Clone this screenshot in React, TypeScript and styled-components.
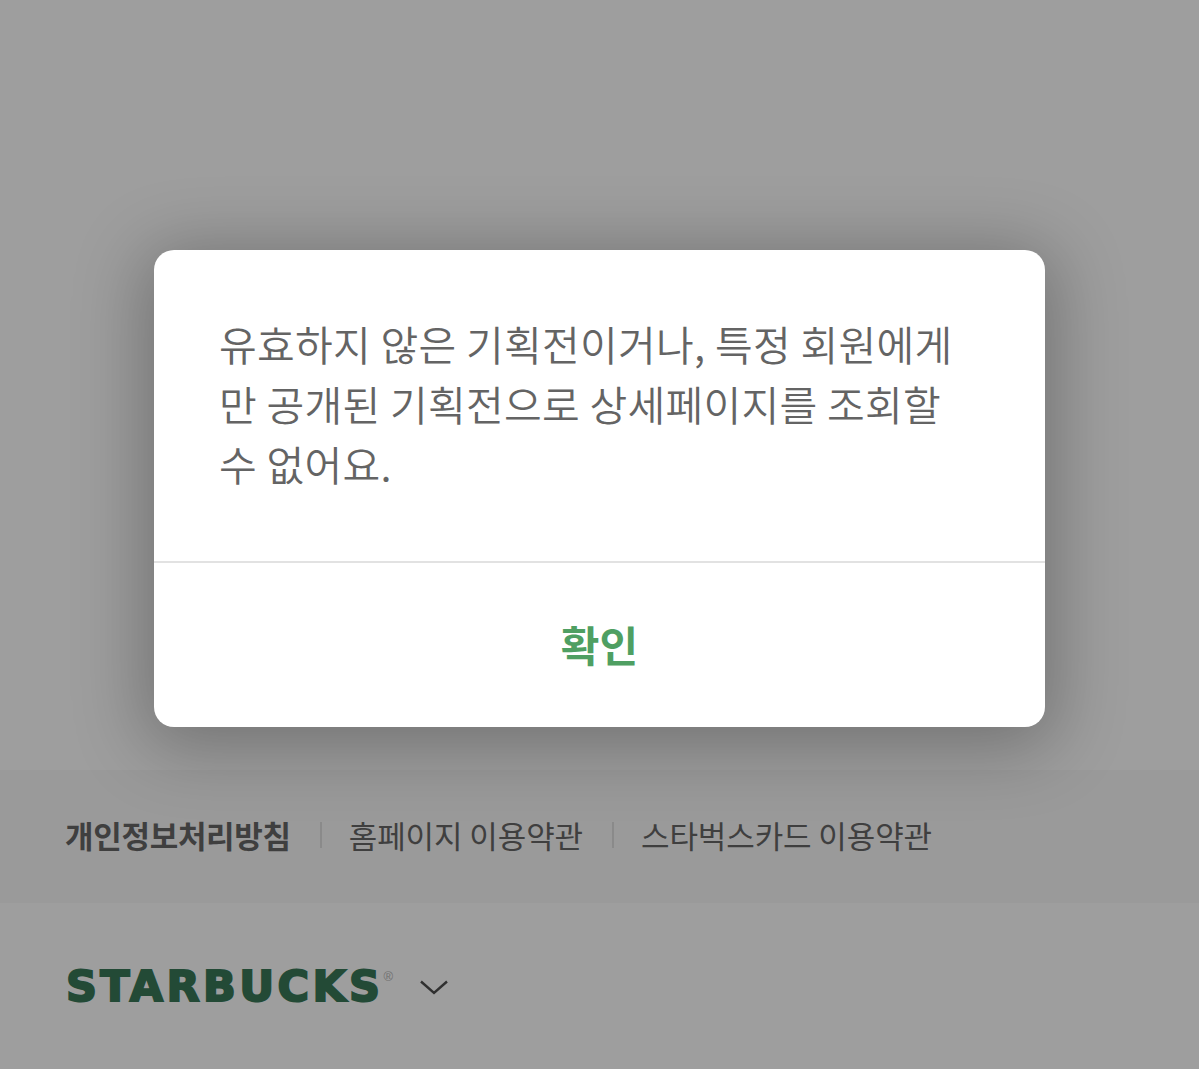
import styled, { createGlobalStyle } from 'styled-components'

const GlobalStyle = createGlobalStyle`
  html, body {
    margin: 0;
    padding: 0;
    background: #9e9e9e;
  }

  * {
    box-sizing: border-box;
  }

  body {
    font-family: "Noto Sans CJK KR", "Noto Sans", sans-serif;
  }
`

const Page = styled.div`
  width: 1199px;
  height: 1069px;
  overflow: hidden;
  display: flex;
  flex-direction: column;
  background: #9e9e9e;
`

const Backdrop = styled.div`
  position: relative;
  z-index: 1;
  height: 770px;
  padding: 250px 154px 0;
`

const Modal = styled.div`
  width: 891px;
  height: 477px;
  background: #fff;
  border-radius: 20px;
  box-shadow: 0 10px 70px 10px rgba(0, 0, 0, 0.28);
  display: flex;
  flex-direction: column;
`

const Message = styled.p`
  height: 313px;
  margin: 0;
  padding: 63px 65px 0;
  border-bottom: 2px solid #e2e2e2;
  font-size: 41px;
  font-weight: 350;
  line-height: 60px;
  letter-spacing: 0.3px;
  color: #646464;
  white-space: nowrap;
`

const ConfirmButton = styled.button`
  flex: 1;
  border: 0;
  padding: 0 0 4px;
  background: transparent;
  font-family: inherit;
  font-size: 42px;
  font-weight: 700;
  color: #4f9f62;
`

const TermsBar = styled.nav`
  height: 133px;
  padding: 0 65px 4px;
  background: #9a9a9a;
  display: flex;
  align-items: center;
`

const TermsLink = styled.a<{ $strong?: boolean }>`
  font-size: 31px;
  font-weight: ${(p) => (p.$strong ? 700 : 400)};
  letter-spacing: ${(p) => (p.$strong ? '-0.3px' : '-0.1px')};
  color: #3f3f3f;
  white-space: nowrap;
`

const Divider = styled.span`
  width: 2px;
  height: 26px;
  margin: 0 27px 0 29px;
  background: #8a8a8a;
`

const BrandRow = styled.div`
  flex: 1;
  padding: 1px 66px 0;
  display: flex;
  align-items: center;
  gap: 26px;
`

const Wordmark = styled.span`
  font-family: "DejaVu Sans", sans-serif;
  font-size: 43px;
  font-weight: 700;
  line-height: 1;
  letter-spacing: 3.4px;
  color: #234a36;
  -webkit-text-stroke: 2px #234a36;
`

const Registered = styled.sup`
  font-family: "Liberation Sans", sans-serif;
  font-size: 13px;
  font-weight: 400;
  letter-spacing: 0;
  color: #6f6f6f;
  -webkit-text-stroke: 0;
  vertical-align: 20px;
  line-height: 0;
`

const Chevron = () => (
  <svg width="30" height="18" viewBox="0 0 30 18" fill="none">
    <path d="M2 3.5 L15 15 L28 3.5" stroke="#303030" strokeWidth="2.4" />
  </svg>
)

const App = () => {
  return (
    <>
      <GlobalStyle />
      <Page>
        <Backdrop>
          <Modal>
            <Message>
              유효하지 않은 기획전이거나, 특정 회원에게
              <br />
              만 공개된 기획전으로 상세페이지를 조회할
              <br />수 없어요.
            </Message>
            <ConfirmButton type="button">확인</ConfirmButton>
          </Modal>
        </Backdrop>
        <TermsBar>
          <TermsLink $strong>개인정보처리방침</TermsLink>
          <Divider />
          <TermsLink>홈페이지 이용약관</TermsLink>
          <Divider />
          <TermsLink>스타벅스카드 이용약관</TermsLink>
        </TermsBar>
        <BrandRow>
          <Wordmark>
            STARBUCKS<Registered>®</Registered>
          </Wordmark>
          <Chevron />
        </BrandRow>
      </Page>
    </>
  )
}

export default App
